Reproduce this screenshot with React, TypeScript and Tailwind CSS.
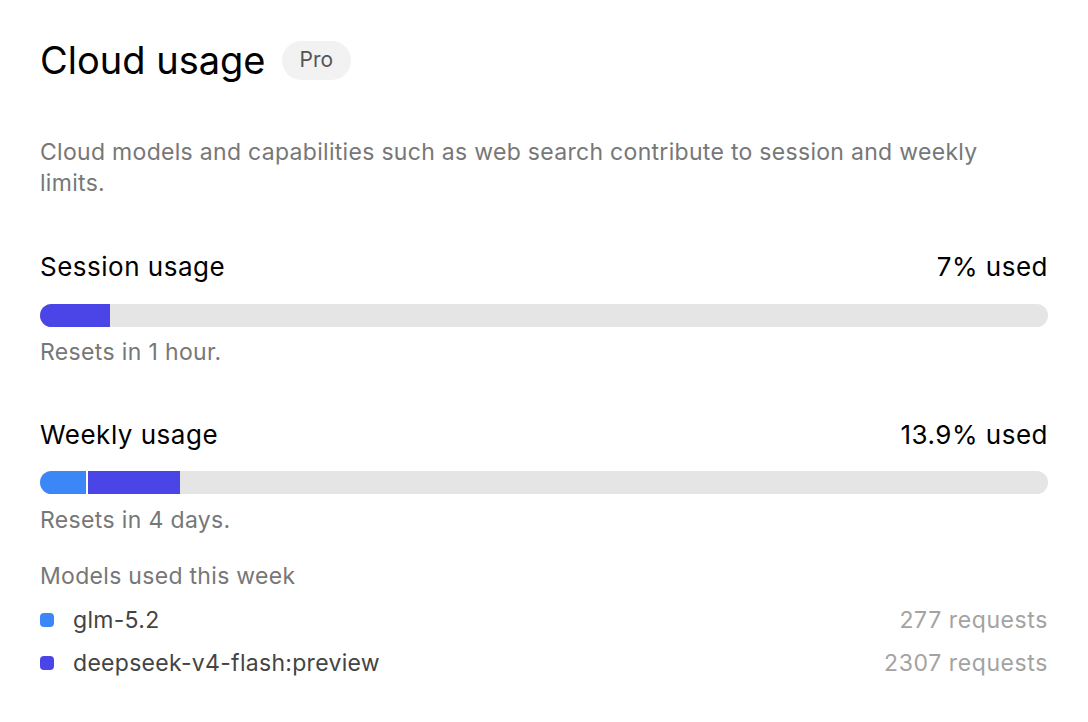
import React from "react";

export default function App() {
  return (
    <div className="w-[1088px] h-[722px] bg-white px-[40px] pt-[40px] text-black" style={{ fontFamily: "Inter, 'Noto Sans', sans-serif" }}>
      <div className="flex items-center h-[40px]">
        <h1 className="text-[38px] leading-[40px] font-normal">Cloud usage</h1>
        <span className="ml-[16px] h-[39px] px-[18px] rounded-full bg-[#f2f2f2] text-[#555555] text-[21px] flex items-center">Pro</span>
      </div>
      <p className="mt-[57px] max-w-[1000px] text-[23px] leading-[31px] tracking-[0.3px] text-[#777777]">
        Cloud models and capabilities such as web search contribute to session and weekly limits.
      </p>

      <div className="mt-[52px] flex justify-between text-[26px] leading-[32px] tracking-[0.5px]">
        <span>Session usage</span>
        <span>7% used</span>
      </div>
      <div className="mt-[21px] h-[23px] rounded-full bg-[#e5e5e5] overflow-hidden flex">
        <div className="w-[70px] h-full bg-[#4b44e6]" />
      </div>
      <div className="mt-[11px] text-[23px] leading-[28px] tracking-[0.35px] text-[#777777]">Resets in 1 hour.</div>

      <div className="mt-[53px] flex justify-between text-[26px] leading-[32px] tracking-[0.5px]">
        <span>Weekly usage</span>
        <span>13.9% used</span>
      </div>
      <div className="mt-[20px] h-[23px] rounded-full bg-[#e5e5e5] overflow-hidden flex">
        <div className="w-[46px] h-full bg-[#3b87f7]" />
        <div className="w-[2px] h-full bg-white" />
        <div className="w-[92px] h-full bg-[#4b44e6]" />
      </div>
      <div className="mt-[12px] text-[23px] leading-[28px] tracking-[0.35px] text-[#777777]">Resets in 4 days.</div>

      <div className="mt-[28px] text-[23px] leading-[28px] tracking-[0.3px] text-[#777777]">Models used this week</div>
      <div className="mt-[16px] flex items-center justify-between text-[23px] leading-[28px] tracking-[0.3px]">
        <div className="flex items-center">
          <span className="w-[14px] h-[14px] rounded-[4px] bg-[#3b87f7]" />
          <span className="ml-[19px] text-[#444444]">glm-5.2</span>
        </div>
        <span className="text-[#a3a3a3] tracking-[0.6px]">277 requests</span>
      </div>
      <div className="mt-[15px] flex items-center justify-between text-[23px] leading-[28px] tracking-[0.3px]">
        <div className="flex items-center">
          <span className="w-[14px] h-[14px] rounded-[4px] bg-[#4b44e6]" />
          <span className="ml-[19px] text-[#444444]">deepseek-v4-flash:preview</span>
        </div>
        <span className="text-[#a3a3a3] tracking-[0.6px]">2307 requests</span>
      </div>
    </div>
  );
}
